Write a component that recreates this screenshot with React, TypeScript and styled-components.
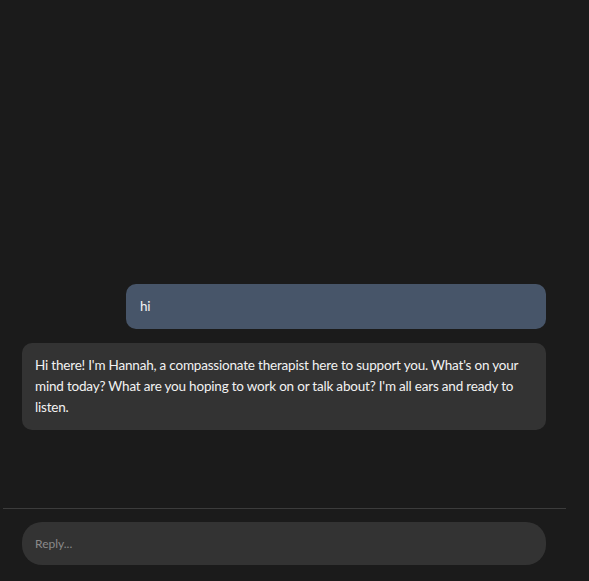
import styled, { createGlobalStyle } from 'styled-components'

const GlobalStyle = createGlobalStyle`
  html, body {
    margin: 0;
    padding: 0;
    height: 100%;
    background: #1b1b1b;
  }
  #root {
    height: 100%;
  }
  * {
    box-sizing: border-box;
  }
`

const Page = styled.div`
  display: flex;
  flex-direction: column;
  width: 566px;
  height: 100vh;
  background: #1b1b1b;
  font-family: Lato, "Open Sans", Arial, sans-serif;
  font-size: 13.5px;
  letter-spacing: -0.2px;
  color: #f2f2f2;
`

const Messages = styled.div`
  flex: 1;
  display: flex;
  flex-direction: column;
  justify-content: flex-end;
  gap: 14px;
  padding: 0 20px 78px 22px;
  overflow-y: auto;
`

const Bubble = styled.div<{ $fromUser?: boolean }>`
  align-self: ${({ $fromUser }) => ($fromUser ? 'flex-end' : 'stretch')};
  width: ${({ $fromUser }) => ($fromUser ? '420px' : 'auto')};
  padding: 12px 12px 12px ${({ $fromUser }) => ($fromUser ? '14px' : '13px')};
  border-radius: 10px;
  background: ${({ $fromUser }) => ($fromUser ? '#475569' : '#333333')};
  line-height: 21px;
  white-space: pre-wrap;
`

const Footer = styled.div`
  margin-left: 3px;
  padding: 13px 20px 16px 19px;
  border-top: 1px solid #3c3c3c;
`

const ReplyInput = styled.input`
  display: block;
  width: 100%;
  height: 43px;
  padding: 0 13px;
  border: none;
  outline: none;
  border-radius: 20px;
  background: #333333;
  color: #f2f2f2;
  font-family: inherit;
  font-size: 12px;
  letter-spacing: 0;
  &::placeholder {
    color: #8a8a8a;
  }
`

const messages = [
  { fromUser: true, text: 'hi' },
  {
    fromUser: false,
    text: "Hi there! I'm Hannah, a compassionate therapist here to support you. What's on your mind today? What are you hoping to work on or talk about? I'm all ears and ready to listen.",
  },
]

export default function App() {
  return (
    <>
      <GlobalStyle />
      <Page>
        <Messages>
          {messages.map((m, i) => (
            <Bubble key={i} $fromUser={m.fromUser}>
              {m.text}
            </Bubble>
          ))}
        </Messages>
        <Footer>
          <ReplyInput placeholder="Reply..." />
        </Footer>
      </Page>
    </>
  )
}
